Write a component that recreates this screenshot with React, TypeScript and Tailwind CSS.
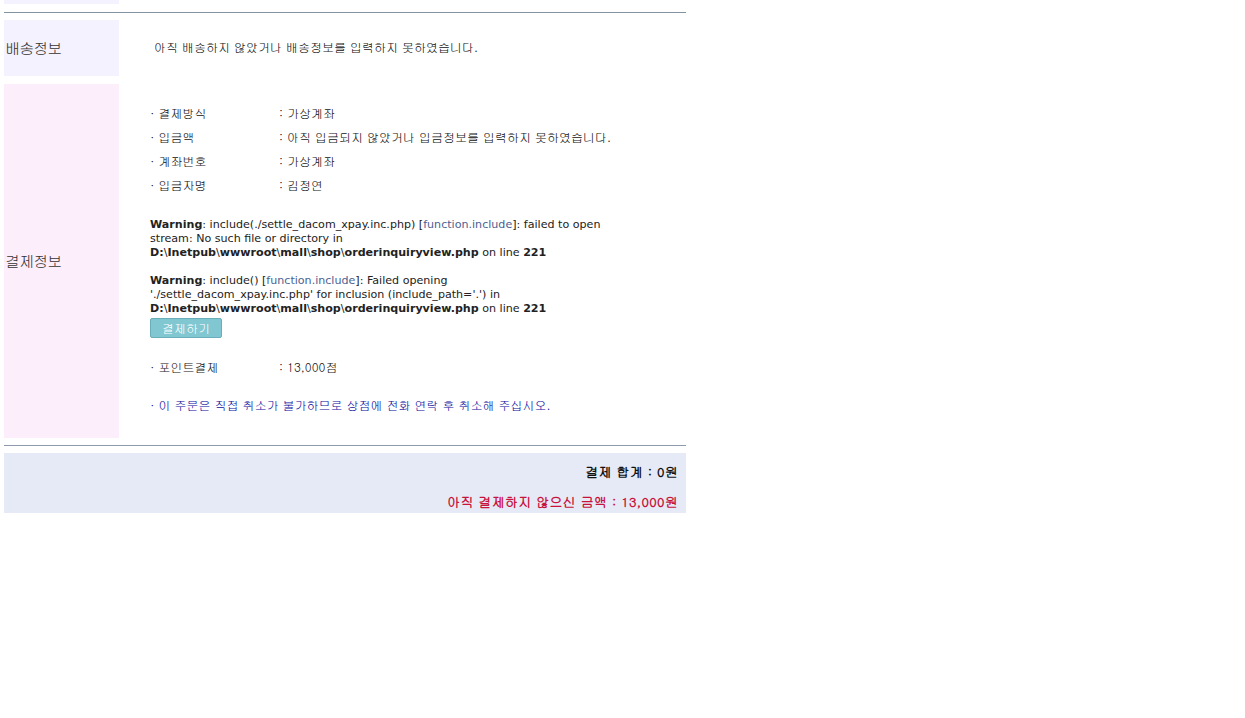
import { FunctionComponent } from "react";

const kr = "font-['Gulim','Noto_Sans_CJK_KR',sans-serif]";

const InfoLine: FunctionComponent<{ label: string; value: string }> = ({ label, value }) => (
  <div className="flex h-[24px] items-center text-[12px] text-[#111]">
    <span className="w-[129px]">· {label}</span>
    <span>: {value}</span>
  </div>
);

const Path = () => (
  <span>
    <b>D:</b>\<b>Inetpub</b>\<b>wwwroot</b>\<b>mall</b>\<b>shop</b>\<b>orderinquiryview.php</b>
  </span>
);

const App = () => {
  return (
    <div className={`w-[682px] ml-[4px] ${kr} bg-white`}>
      <div className="w-[115px] h-[4px] bg-[#f4f2fe]" />
      <div className="mt-[8px] h-px bg-[#8592a0]" />

      {/* 배송정보 */}
      <div className="mt-[7px] flex h-[56px]">
        <div className="w-[115px] bg-[#f4f2fe] flex items-center pl-px text-[15px] font-medium tracking-[-0.8px] text-[#333]">
          배송정보
        </div>
        <div className="flex items-center pl-[35px] pb-[2px] text-[12px] text-[#111]">
          아직 배송하지 않았거나 배송정보를 입력하지 못하였습니다.
        </div>
      </div>

      {/* 결제정보 */}
      <div className="mt-[8px] flex h-[354px]">
        <div className="w-[115px] bg-[#fdeefb] flex items-center pl-px text-[15px] font-medium tracking-[-0.8px] text-[#333]">
          결제정보
        </div>
        <div className="pl-[31px] pt-[17px]">
          <InfoLine label="결제방식" value="가상계좌" />
          <InfoLine label="입금액" value="아직 입금되지 않았거나 입금정보를 입력하지 못하였습니다." />
          <InfoLine label="계좌번호" value="가상계좌" />
          <InfoLine label="입금자명" value="김정연" />

          <div className="mt-[21px] font-['Tahoma','DejaVu_Sans',sans-serif] text-[11.1px] leading-[14px] text-[#222] whitespace-nowrap">
            <div>
              <b>Warning</b>: include(./settle_dacom_xpay.inc.php) [
              <span className="text-[#4b5f91]">function.include</span>]: failed to open
            </div>
            <div>stream: No such file or directory in</div>
            <div>
              <Path /> on line <b>221</b>
            </div>
            <div className="h-[14px]" />
            <div>
              <b>Warning</b>: include() [<span className="text-[#4b5f91]">function.include</span>]: Failed opening
            </div>
            <div>'./settle_dacom_xpay.inc.php' for inclusion (include_path='.') in</div>
            <div>
              <Path /> on line <b>221</b>
            </div>
          </div>

          <button className="block mt-[2px] w-[72px] h-[20px] rounded-[2px] border border-[#6aaeb9] bg-[#80c7d1] text-[12px] text-white leading-none">
            결제하기
          </button>

          <div className="mt-[17px]">
            <InfoLine label="포인트결제" value="13,000점" />
          </div>
          <div className="mt-[14px] h-[24px] flex items-center text-[12px] text-[#0a0a9a]">
            · 이 주문은 직접 취소가 불가하므로 상점에 전화 연락 후 취소해 주십시오.
          </div>
        </div>
      </div>

      <div className="mt-[7px] h-px bg-[#8e9aab]" />

      {/* 합계 */}
      <div className="mt-[7px] h-[60px] bg-[#e6eaf6] flex flex-col items-end pr-[8px] text-[13px] font-bold tracking-[0.3px]">
        <div className="mt-[11px] h-[16px] flex items-center text-[#111]">결제 합계 : 0원</div>
        <div className="mt-[14px] h-[16px] flex items-center text-[#c8143c]">
          아직 결제하지 않으신 금액 : 13,000원
        </div>
      </div>
    </div>
  );
};

export default App;
